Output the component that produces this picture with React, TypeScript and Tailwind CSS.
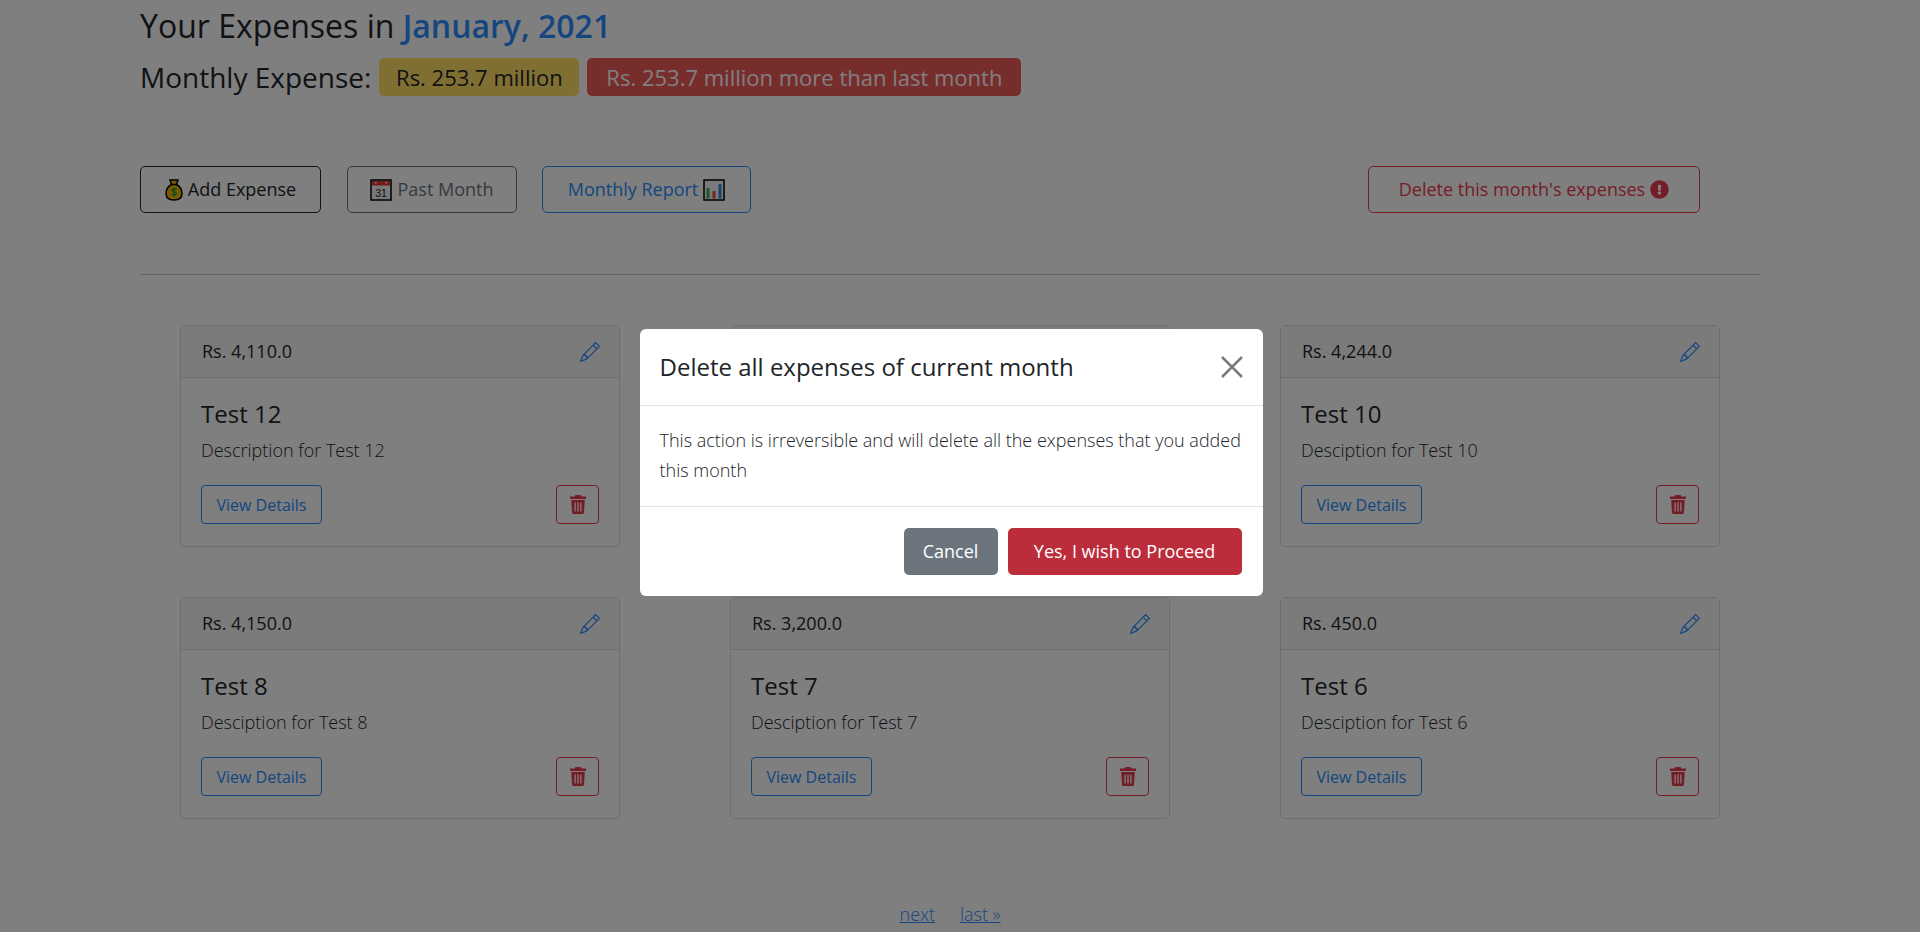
import React from 'react';
import { FaExclamationCircle } from 'react-icons/fa';
import { BsPencil } from 'react-icons/bs';

const expenses = [
  { amount: 'Rs. 4,110.0', title: 'Test 12', description: 'Description for Test 12' },
  { amount: 'Rs. 4,200.0', title: 'Test 11', description: 'Desciption for Test 11' },
  { amount: 'Rs. 4,244.0', title: 'Test 10', description: 'Desciption for Test 10' },
  { amount: 'Rs. 4,150.0', title: 'Test 8', description: 'Desciption for Test 8' },
  { amount: 'Rs. 3,200.0', title: 'Test 7', description: 'Desciption for Test 7' },
  { amount: 'Rs. 450.0', title: 'Test 6', description: 'Desciption for Test 6' },
];

function MoneyBag() {
  return (
    <svg width="18" height="22" viewBox="0 0 18 22" className="shrink-0">
      <path d="M5 1h8l-1.5 4.5c3.500 2 5.500 5.500 5.500 9 0 4-3 6.500-8 6.500s-8-2.500-8-6.500c0-3.500 2-7 5.500-9z" fill="#f0b400" stroke="#000" strokeWidth="1.500" />
      <path d="M6 5.500h6" stroke="#000" strokeWidth="1.500" />
      <path d="M11.500 10.500c-.8-1-4.500-1.200-4.500.8 0 2 4.500 1.200 4.500 3.300 0 2-3.700 1.800-4.700.7M9 8.500v9" fill="none" stroke="#16a02a" strokeWidth="1.300" />
    </svg>
  );
}

function CalendarIcon() {
  return (
    <svg width="22" height="22" viewBox="0 0 22 22" className="shrink-0">
      <rect x="1" y="1" width="20" height="20" fill="#f2f2f2" stroke="#000" strokeWidth="1.500" />
      <rect x="2" y="2" width="18" height="4.500" fill="#e53935" />
      <rect x="5" y="3" width="1.500" height="1.500" fill="#fff" />
      <rect x="15.500" y="3" width="1.500" height="1.500" fill="#fff" />
      <text x="11" y="17.500" textAnchor="middle" fontSize="10.500" fontFamily="'Liberation Sans', sans-serif" fill="#222">31</text>
    </svg>
  );
}

function ChartIcon() {
  return (
    <svg width="22" height="22" viewBox="0 0 22 22" className="shrink-0">
      <rect x="1" y="1" width="20" height="20" fill="#f4f4f4" stroke="#000" strokeWidth="1.500" />
      <rect x="3.500" y="9" width="3" height="10.500" fill="#2eb84b" />
      <rect x="9.500" y="12" width="3" height="7.500" fill="#ef4b3c" />
      <rect x="15.500" y="5" width="3" height="14.500" fill="#2b8de8" />
    </svg>
  );
}

function TrashIcon() {
  return (
    <svg width="16" height="19" viewBox="0 0 16 19" fill="currentColor">
      <path d="M5.500 0h5l1 1.500H16V4H0V1.500h4.500z" />
      <path fillRule="evenodd" d="M1.200 5h13.600l-.8 12.500c-.1.900-.7 1.500-1.600 1.500H3.600c-.9 0-1.500-.6-1.600-1.500zM4.500 7.500v9h1.300v-9zM7.350 7.500v9h1.300v-9zM10.200 7.500v9h1.300v-9z" />
    </svg>
  );
}

function ExpenseCard({ amount, title, description }: { amount: string; title: string; description: string }) {
  return (
    <div className="flex h-[222px] flex-col rounded-[5px] border border-[#dcdcdc] bg-white">
      <div className="flex h-[52px] items-center justify-between border-b border-[#dcdcdc] bg-[#f7f7f7] pl-[21px] pr-[19px]">
        <span className="text-[18px] text-[#212529]">{amount}</span>
        <BsPencil className="text-[20px] text-[#2a8cff]" />
      </div>
      <div className="flex flex-1 flex-col px-[20px] pt-[18px]">
        <h5 className="text-[24px] leading-[36px] text-[#212529]">{title}</h5>
        <p className="mt-[5px] text-[18px] font-light leading-[27px] text-[#212529]">{description}</p>
        <div className="mt-[21px] flex items-center justify-between">
          <button className="h-[39px] w-[121px] rounded-[4px] border border-[#2a8cff] text-[16px] text-[#2a8cff]">View Details</button>
          <button className="flex h-[39px] w-[43px] items-center justify-center rounded-[4px] border border-[#ea3b4c] text-[#ea3b4c]">
            <TrashIcon />
          </button>
        </div>
      </div>
    </div>
  );
}

export default function App() {
  return (
    <div className="relative h-[932px] w-full overflow-hidden bg-white font-['Open_Sans',sans-serif] text-[#212529]">
      <div className="ml-[140px] w-[1620px]">
        <h3 className="pt-[2px] text-[32px] leading-[48px]">
          Your Expenses in <span className="font-semibold text-[#2a8cff]">January, 2021</span>
        </h3>
        <div className="mt-[8px] flex items-center">
          <span className="text-[28px] leading-[38px]">Monthly Expense:</span>
          <span className="ml-[8px] flex h-[38px] w-[200px] items-center justify-center rounded-[5px] bg-[#ffdf66] text-[22px]">Rs. 253.7 million</span>
          <span className="ml-[8px] flex h-[38px] w-[434px] items-center justify-center rounded-[5px] bg-[#f05a5a] text-[22px] text-white">Rs. 253.7 million more than last month</span>
        </div>

        <div className="mt-[70px] flex items-center justify-between pr-[60px]">
          <div className="flex items-center">
            <button className="flex h-[47px] w-[181px] items-center justify-center gap-[5px] rounded-[5px] border border-[#212529] text-[18px]">
              <MoneyBag />
              Add Expense
            </button>
            <button className="ml-[26px] flex h-[47px] w-[170px] items-center justify-center gap-[5px] rounded-[5px] border border-[#6c757d] text-[18px] text-[#6c757d]">
              <CalendarIcon />
              Past Month
            </button>
            <button className="ml-[25px] flex h-[47px] w-[209px] items-center justify-center gap-[5px] rounded-[5px] border border-[#2a8cff] text-[18px] text-[#2a8cff]">
              Monthly Report
              <ChartIcon />
            </button>
          </div>
          <button className="flex h-[47px] w-[332px] items-center justify-center gap-[5px] rounded-[5px] border border-[#ea3b4c] text-[18px] text-[#ea3b4c]">
            Delete this month's expenses
            <FaExclamationCircle className="text-[19px]" />
          </button>
        </div>

        <hr className="mt-[61px] border-[#c4c4c4]" />

        <div className="mt-[50px] grid grid-cols-3 gap-x-[110px] gap-y-[50px] px-[40px]">
          {expenses.map((expense) => (
            <ExpenseCard key={expense.title} {...expense} />
          ))}
        </div>

        <div className="mt-[82px] flex justify-center gap-[25px] text-[18px] font-light text-[#2a8cff]">
          <a href="#" className="underline">next</a>
          <a href="#" className="underline">last »</a>
        </div>
      </div>

      {/* modal backdrop */}
      <div className="fixed inset-0 flex justify-center bg-black/50 pr-[18px] pt-[329px]">
        <div className="h-[267px] w-[623px] rounded-[6px] bg-white">
          <div className="flex h-[77px] items-center justify-between border-b border-[#dee2e6] pl-[20px] pr-[20px]">
            <h5 className="text-[24px] text-[#212529]">Delete all expenses of current month</h5>
            <svg width="22" height="22" viewBox="0 0 22 22" className="text-[#7b7b7b]">
              <path d="M1 1l20 20M21 1L1 21" stroke="currentColor" strokeWidth="2.500" fill="none" />
            </svg>
          </div>
          <div className="h-[101px] border-b border-[#dee2e6] px-[20px] pt-[19px]">
            <p className="text-[18px] font-light leading-[30px] text-[#212529]">
              This action is irreversible and will delete all the expenses that you added this month
            </p>
          </div>
          <div className="flex justify-end gap-[10px] px-[21px] pt-[21px]">
            <button className="h-[47px] w-[94px] rounded-[5px] bg-[#6c757d] text-[18px] text-white">Cancel</button>
            <button className="h-[47px] w-[234px] rounded-[5px] bg-[#bb2d3b] text-[18px] text-white">Yes, I wish to Proceed</button>
          </div>
        </div>
      </div>
    </div>
  );
}
